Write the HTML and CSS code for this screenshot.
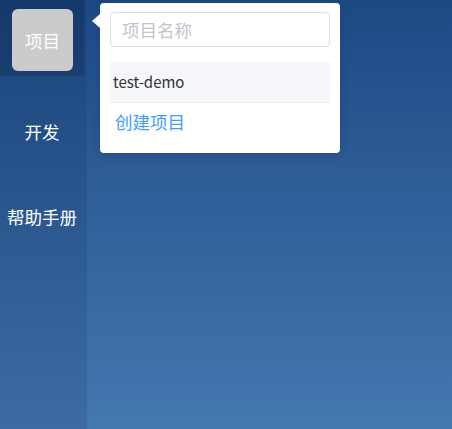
FILE: index.html
```html
<!DOCTYPE html>
<html lang="zh-CN">
<head>
    <meta charset="UTF-8">
    <meta name="viewport" content="width=device-width, initial-scale=1.0">
    <title>项目</title>
    <link rel="stylesheet" href="styles.css">
</head>
<body>
    <div class="layout">
        <!-- 左侧导航 -->
        <ul class="nav">
            <li class="nav-item active"><span class="nav-btn">项目</span></li>
            <li class="nav-item first-sub">开发</li>
            <li class="nav-item">帮助手册</li>
        </ul>
        <div class="main">
            <!-- 项目选择弹窗 -->
            <div class="popover">
                <input class="search" type="text" placeholder="项目名称">
                <ul class="project-list">
                    <li class="project">test-demo</li>
                </ul>
                <a class="create" href="#">创建项目</a>
            </div>
        </div>
    </div>
</body>
</html>
```

FILE: styles.css
```css
*{
    padding: 0;
    margin: 0;
    list-style: none;
    box-sizing: border-box;
}
html, body{
    width: 100%;
    height: 100%;
}
body{
    font-family: "Noto Sans CJK SC", "Noto Sans", sans-serif;
    background: linear-gradient(180deg, #1d4985 0%, #4478b1 100%);
    overflow: hidden;
}

.layout{
    display: flex;
    height: 100%;
}

.nav{
    width: 87px;
    height: 100%;
    background: rgba(10, 30, 60, 0.13);
    color: #fff;
    font-size: 17.5px;
}
.nav-item{
    width: 84px;
    height: 76px;
    display: flex;
    align-items: center;
    justify-content: center;
    margin-top: 9px;
}
.nav-item.active{
    margin-top: 0;
    background: rgba(10, 25, 60, 0.24);
}
.nav-item.first-sub{
    margin-top: 17px;
}
.nav-btn{
    width: 61px;
    height: 62px;
    margin-left: 1px;
    margin-top: 4px;
    border-radius: 6px;
    background: #cbcbcb;
    display: flex;
    align-items: center;
    justify-content: center;
}

.main{
    flex: 1;
    position: relative;
}

.popover{
    position: absolute;
    left: 13px;
    top: 3px;
    width: 240px;
    background: #fff;
    border-radius: 4px;
    padding: 9px 10px 19px;
    box-shadow: 0 2px 12px rgba(0, 0, 0, 0.15);
}
.popover::before{
    content: "";
    position: absolute;
    left: -8px;
    top: 11px;
    border-top: 7px solid transparent;
    border-bottom: 7px solid transparent;
    border-right: 8px solid #fff;
}

.search{
    display: block;
    width: 100%;
    height: 35px;
    border: 1px solid #dcdfe6;
    border-radius: 4px;
    padding: 0 11px;
    font-family: inherit;
    font-size: 17.5px;
    color: #606266;
    outline: none;
}
.search::placeholder{
    color: #c0c4cc;
}

.project-list{
    margin-top: 15px;
    border-bottom: 1px solid #ebeef5;
}
.project{
    height: 40px;
    line-height: 40px;
    padding-left: 3px;
    background: #f5f7fa;
    font-size: 15px;
    color: #303133;
}

.create{
    display: block;
    margin-top: 7px;
    padding-left: 5px;
    font-size: 17.5px;
    line-height: 24px;
    color: #409eff;
    text-decoration: none;
}
```
